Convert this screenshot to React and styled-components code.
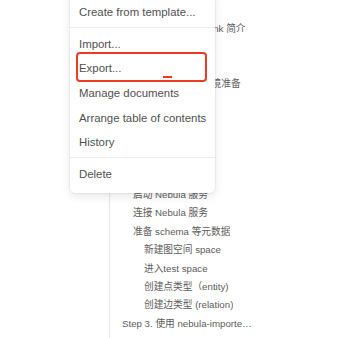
import React from "react";
import styled, { createGlobalStyle } from "styled-components";

const Global = createGlobalStyle`
  html, body { margin: 0; padding: 0; background: #fff; }
  body { width: 338px; height: 338px; overflow: hidden; }
`;

const Page = styled.div`
  position: relative;
  width: 338px;
  height: 338px;
  overflow: hidden;
  background: #fff;
  font-family: "Liberation Sans", "Noto Sans CJK SC", sans-serif;
`;

const Tree = styled.div`
  display: flex;
  flex-direction: column;
  margin-left: 109px;
  width: 150px;
  height: 338px;
  border-left: 1px solid #e6e6e6;
  padding-top: 1.4px;
  box-sizing: border-box;
`;

const Node = styled.div`
  flex: 0 0 18.43px;
  line-height: 18.43px;
  padding-left: ${(p) => 1 + p.$level * 11}px;
  font-size: 9.7px;
  color: #5c5c5c;
  white-space: nowrap;
`;

const Clip = styled.span`
  display: inline-block;
  max-width: ${(p) => (p.$max ? `${p.$max}px` : "none")};
  overflow: hidden;
  text-overflow: ellipsis;
  vertical-align: top;
`;

const Menu = styled.div`
  position: absolute;
  left: 70px;
  top: -8px;
  width: 145px;
  display: flex;
  flex-direction: column;
  padding: 8px 0 6px;
  background: #fff;
  border-radius: 5px;
  box-shadow: 0 0 0 1px rgba(0, 0, 0, 0.04), 0 3px 10px rgba(0, 0, 0, 0.1);
  font-family: "Liberation Sans", sans-serif;
`;

const Item = styled.div`
  flex: 0 0 24.65px;
  line-height: 24.65px;
  padding-left: 9px;
  font-size: 11.4px;
  color: #505050;
  white-space: nowrap;
`;

const Divider = styled.div`
  flex: 0 0 1px;
  background: #ececec;
  margin: 2.5px 0 3.5px;
`;

const Highlight = styled.div`
  position: absolute;
  left: 76px;
  top: 52px;
  width: 131px;
  height: 30px;
  box-sizing: border-box;
  border: 2px solid #ee3b1f;
  border-radius: 4px;
`;

const Cursor = styled.div`
  position: absolute;
  left: 163px;
  top: 76px;
  width: 9px;
  height: 2px;
  background: #ee3b1f;
`;

const nodes = [
  { level: 1, text: "Step 1. 背景" },
  { level: 2, text: "Nebula Graph、Flink 简介" },
  { level: 2, text: "数据说明" },
  { level: 1, text: "Step 2. 准备" },
  { level: 2, text: "Flink 和 Nebula 环境准备" },
  { level: 2, text: "数据格式" },
  { level: 2, text: "下载数据" },
  { level: 2, text: "解压文件" },
  { level: 1, text: "Step 2. Nebula 准备" },
  { level: 2, text: "部署集群" },
  { level: 2, text: "启动 Nebula 服务" },
  { level: 2, text: "连接 Nebula 服务" },
  { level: 2, text: "准备 schema 等元数据" },
  { level: 3, text: "新建图空间 space" },
  { level: 3, text: "进入test space" },
  { level: 3, text: "创建点类型（entity)" },
  { level: 3, text: "创建边类型 (relation)" },
  { level: 1, text: "Step 3. 使用 nebula-importer 导入数据", max: 130 },
];

const menuGroups = [
  ["Create from template..."],
  ["Import...", "Export...", "Manage documents", "Arrange table of contents", "History"],
  ["Delete"],
];

export default function App() {
  return (
    <Page>
      <Global />
      <Tree>
        {nodes.map((n, i) => (
          <Node key={i} $level={n.level}>
            <Clip $max={n.max}>{n.text}</Clip>
          </Node>
        ))}
      </Tree>
      <Menu>
        {menuGroups.map((g, gi) => (
          <React.Fragment key={gi}>
            {gi > 0 && <Divider />}
            {g.map((t) => (
              <Item key={t}>{t}</Item>
            ))}
          </React.Fragment>
        ))}
      </Menu>
      <Highlight />
      <Cursor />
    </Page>
  );
}
